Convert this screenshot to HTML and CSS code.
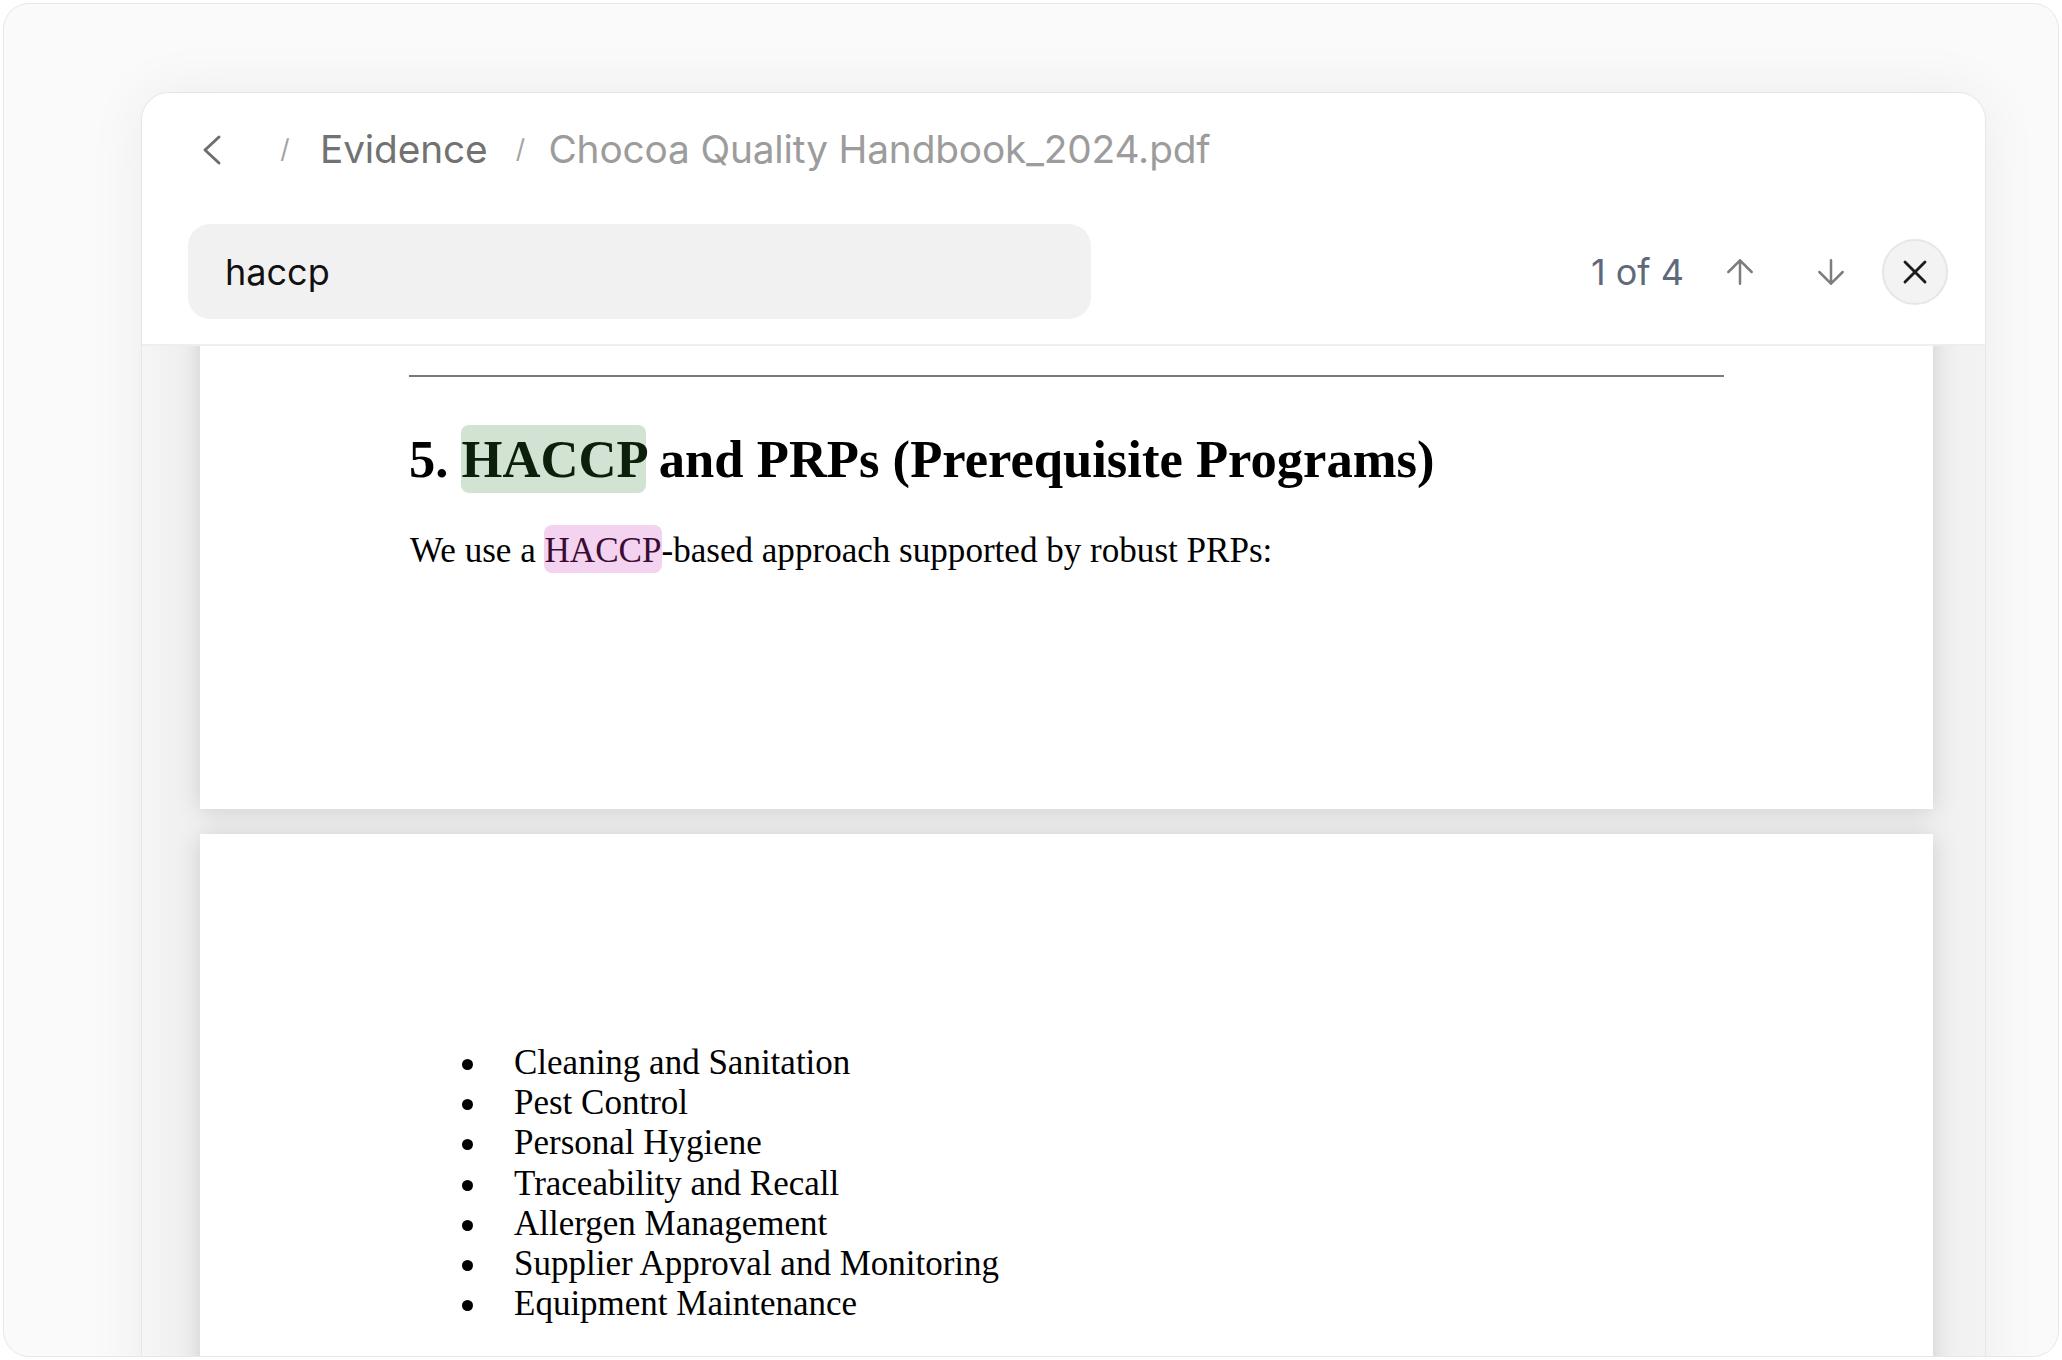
FILE: index.html
```html
<!DOCTYPE html>
<html lang="en">
<head>
<meta charset="utf-8">
<title>Evidence - Chocoa Quality Handbook_2024.pdf</title>
<link rel="stylesheet" href="styles.css">
</head>
<body>
<div class="frame">
  <div class="panel">
    <header class="header">
      <nav class="crumbs">
        <button class="back" aria-label="Back">
          <svg width="24" height="32" viewBox="0 0 24 32"><path d="M19 3 L5 16 L19 29" fill="none" stroke="#6e6e6e" stroke-width="3" stroke-linecap="round" stroke-linejoin="round"/></svg>
        </button>
        <span class="sep sep1">/</span>
        <span class="crumb">Evidence</span>
        <span class="sep sep2">/</span>
        <span class="crumb current">Chocoa Quality Handbook_2024.pdf</span>
      </nav>
      <div class="searchrow">
        <div class="search">haccp</div>
        <div class="spacer"></div>
        <span class="count">1 of 4</span>
        <button class="nav up" aria-label="Previous match">
          <svg width="40" height="40" viewBox="0 0 24 24"><path d="M5 12 12 5 19 12M12 19V5" fill="none" stroke="#7d7d7d" stroke-width="1.5" stroke-linecap="round" stroke-linejoin="round"/></svg>
        </button>
        <button class="nav down" aria-label="Next match">
          <svg width="40" height="40" viewBox="0 0 24 24"><path d="M19 12 12 19 5 12M12 5V19" fill="none" stroke="#7d7d7d" stroke-width="1.5" stroke-linecap="round" stroke-linejoin="round"/></svg>
        </button>
        <button class="close" aria-label="Close search">
          <svg width="40" height="40" viewBox="0 0 24 24"><path d="M18 6 6 18M6 6l12 12" fill="none" stroke="#1c1c1c" stroke-width="1.7" stroke-linecap="round"/></svg>
        </button>
      </div>
    </header>
    <main class="viewer">
      <section class="page page1">
        <div class="rule"></div>
        <h2 class="h">5. <span class="hl-green">HACCP</span> and PRPs (Prerequisite Programs)</h2>
        <p class="p">We use a <span class="hl-pink">HACCP</span>-based approach supported by robust PRPs:</p>
      </section>
      <section class="page page2">
        <ul class="list">
          <li><span class="dot"></span>Cleaning and Sanitation</li>
          <li><span class="dot"></span>Pest Control</li>
          <li><span class="dot"></span>Personal Hygiene</li>
          <li><span class="dot"></span>Traceability and Recall</li>
          <li><span class="dot"></span>Allergen Management</li>
          <li><span class="dot"></span>Supplier Approval and Monitoring</li>
          <li><span class="dot"></span>Equipment Maintenance</li>
        </ul>
      </section>
    </main>
  </div>
</div>
</body>
</html>
```
FILE: styles.css
```css
* { box-sizing: border-box; }
html, body { margin: 0; padding: 0; background: #ffffff; }
body { font-family: "Inter", "Noto Sans", sans-serif; }

.frame {
  margin: 3px;
  width: 2056px;
  height: 1354px;
  border: 1px solid #e7e7e7;
  border-radius: 26px;
  background: #fafafa;
  overflow: hidden;
}

.panel {
  margin: 88px 0 0 137px;
  width: 1845px;
  height: 1400px;
  border: 1px solid #e6e6e6;
  border-radius: 28px;
  background: #f1f1f1;
  overflow: hidden;
  box-shadow: 0 0 60px rgba(0, 0, 0, 0.06);
  display: flex;
  flex-direction: column;
}

.header {
  position: relative;
  z-index: 2;
  background: #ffffff;
  height: 253px;
  padding: 0 37px 0 46px;
  border-bottom: 2px solid #eeeeee;
  flex: none;
}

.crumbs {
  display: flex;
  align-items: center;
  height: 64px;
  margin-top: 23px;
}

button {
  border: none;
  background: none;
  padding: 0;
  margin: 0;
  display: flex;
  align-items: center;
  justify-content: center;
  cursor: pointer;
}

.back { width: 48px; height: 48px; margin-top: 4px; }

.sep {
  font-size: 26px;
  color: #a3a3a3;
  width: 24px;
  text-align: center;
}
.sep1 { margin-left: 37px; margin-right: 23px; }
.sep2 { margin-left: 21px; margin-right: 16px; }

.crumb {
  font-size: 38.8px;
  color: #727272;
  letter-spacing: -0.15px;
}
.crumb.current { color: #9c9c9c; }

.searchrow {
  display: flex;
  align-items: center;
  height: 95px;
  margin-top: 44px;
}

.search {
  width: 903px;
  height: 95px;
  border-radius: 22px;
  background: #f1f1f1;
  padding-left: 37px;
  display: flex;
  align-items: center;
  font-size: 36px;
  color: #111111;
}

.spacer { flex: 1; }

.count {
  font-size: 36px;
  color: #5e6a7b;
}

.nav { width: 56px; height: 56px; }
.up { margin-left: 28px; }
.down { margin-left: 35px; }

.close {
  width: 66px;
  height: 66px;
  margin-left: 23px;
  border-radius: 50%;
  background: #f3f3f3;
  border: 2px solid #e6e6e6;
}

.viewer {
  flex: 1;
  display: flex;
  flex-direction: column;
  overflow: hidden;
  padding: 0 52px 0 58px;
  background: linear-gradient(90deg, #f6f6f6 0px, #f1f1f1 30px, #f1f1f1 calc(100% - 30px), #f3f3f3 100%);
}

.page {
  background: #ffffff;
  box-shadow: 0 2px 24px rgba(0, 0, 0, 0.15);
  padding: 0 209px;
  font-family: "Liberation Serif", "Times New Roman", serif;
  color: #000000;
  flex: none;
}

.page1 {
  margin-top: -80px;
  padding-top: 109px;
  height: 543px;
}

.rule {
  height: 2px;
  background: #7a7a7a;
}

.h {
  margin: 52px 0 0 0;
  font-size: 52.6px;
  line-height: 60px;
  font-weight: bold;
  white-space: nowrap;
}

.hl-green {
  background: #d3e3d3;
  color: #0b1f0b;
  border-radius: 8px;
  padding: 5px 0 5px 1px;
  margin: 0 0 0 -1px;
}

.p {
  margin: 42px 0 0 1px;
  font-size: 35.1px;
  line-height: 40px;
  white-space: nowrap;
}

.hl-pink {
  background: #f3d3ef;
  color: #3a0c33;
  border-radius: 8px;
  padding: 6px 1px 3px;
  margin: 0 -1px;
}

.page2 {
  margin-top: 25px;
  padding-top: 209px;
  height: 900px;
}

.list {
  list-style: none;
  margin: 0;
  padding: 0;
}

.list li {
  font-size: 35px;
  line-height: 40.2px;
  white-space: nowrap;
  display: flex;
  align-items: baseline;
}

.dot {
  display: block;
  flex: none;
  align-self: flex-start;
  width: 11px;
  height: 11px;
  border-radius: 50%;
  background: #000000;
  margin: 16px 41px 0 53px;
}
```
